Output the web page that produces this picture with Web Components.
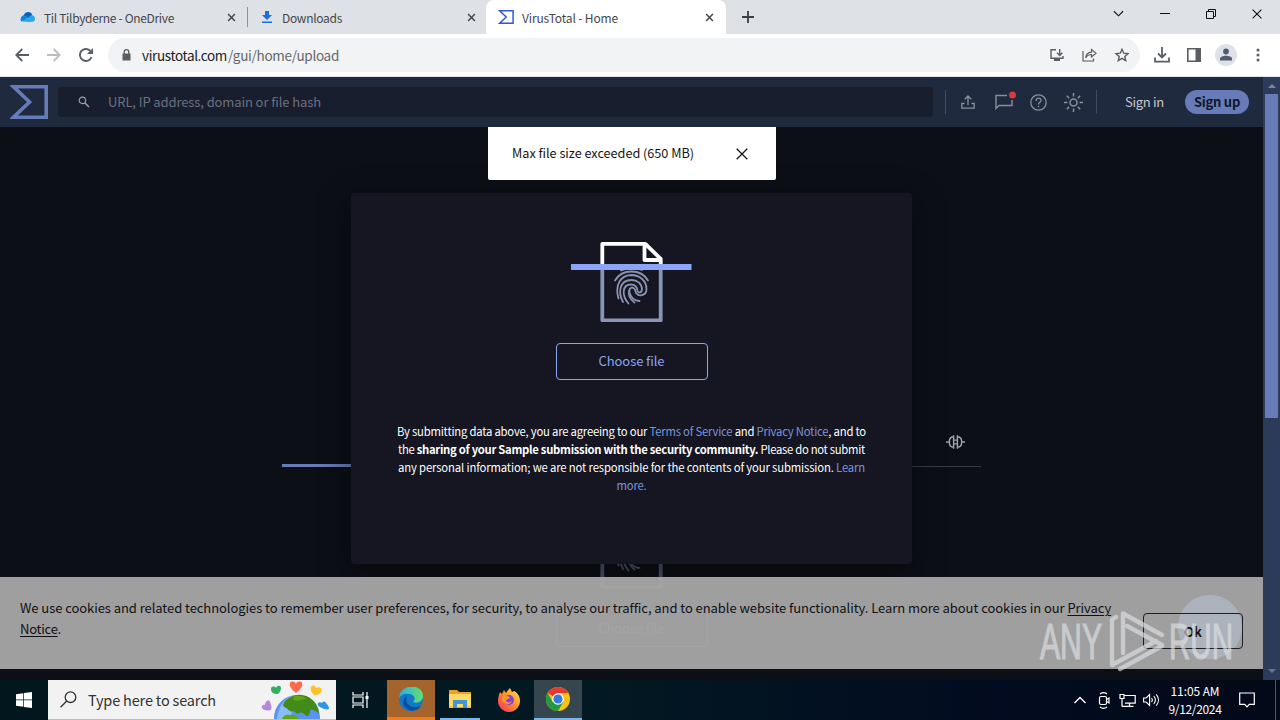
<!DOCTYPE html>
<html lang="en">
<head>
<meta charset="utf-8">
<title>VirusTotal - Home</title>
<style>
html, body {
  margin: 0;
  width: 1280px;
  height: 720px;
  overflow: hidden;
}
body {
  font-family: "Noto Sans CJK SC", "Noto Sans", sans-serif;
  display: flex;
  flex-direction: column;
}
</style>
</head>
<body>
<browser-tabs></browser-tabs>
<browser-toolbar></browser-toolbar>
<vt-page></vt-page>
<task-bar></task-bar>

<script>
const ICONS = {
  cloud: `<svg viewBox="0 0 18 14"><path fill="#0a63b8" d="M4 5C6 0 13 0 14 5L9 9 1 8z"/><path fill="#1683dc" d="M1 12C-1 8 2 5 6 5l9 7z"/><path fill="#29a9ea" d="M3 12c2-2 7-5 10-7 3-1 6 4 3 7-1 1-11 1-13 0z"/></svg>`,
  downBlue: `<svg viewBox="0 0 12 14"><path fill="#1a6fe0" d="M4 1h4v4h3L6 10 1 5h3zM1 11.5h10V13H1z"/></svg>`,
  close: `<svg viewBox="0 0 10 10"><path stroke="currentColor" stroke-width="1.7" d="M1.2 1.2l7.6 7.6m0-7.6L1.2 8.8"/></svg>`,
  thinClose: `<svg viewBox="0 0 12 12"><path stroke="currentColor" stroke-width="1.3" d="M.7.7l10.6 10.6m0-10.6L.7 11.3"/></svg>`,
  plus: `<svg viewBox="0 0 12 12"><path stroke="currentColor" stroke-width="1.8" d="M6 0v12M0 6h12"/></svg>`,
  sigma: `<svg viewBox="0 0 38 34"><path fill="none" stroke="currentColor" stroke-width="3.6" d="M3.5 1.8h32.7v30.4H3.5L19.5 17z"/></svg>`,
  chevDown: `<svg viewBox="0 0 12 8"><path fill="none" stroke="currentColor" stroke-width="1.2" d="M1 1l5 5 5-5"/></svg>`,
  chevUp: `<svg viewBox="0 0 12 8"><path fill="none" stroke="currentColor" stroke-width="1.4" d="M.5 7L6 1.5 11.5 7"/></svg>`,
  minimize: `<svg viewBox="0 0 10 10"><path stroke="currentColor" d="M0 4.5h10"/></svg>`,
  restore: `<svg viewBox="0 0 10 10"><path fill="none" stroke="currentColor" d="M.5 2.5h7v7h-7zM2.5 2.5v-2h7v7h-2"/></svg>`,
  back: `<svg viewBox="0 0 14 14"><path fill="none" stroke="currentColor" stroke-width="1.8" d="M14 7H1.5M7.3 1L1.3 7l6 6"/></svg>`,
  forward: `<svg viewBox="0 0 14 14"><path fill="none" stroke="currentColor" stroke-width="1.8" d="M0 7h12.5M6.7 1l6 6-6 6"/></svg>`,
  reload: `<svg viewBox="0 0 14 14"><path fill="none" stroke="currentColor" stroke-width="1.9" d="M12.6 9A6 6 0 1 1 11.4 2.9"/><path fill="currentColor" d="M14 0v6H8z"/></svg>`,
  lock: `<svg viewBox="0 0 9 12"><path fill="currentColor" d="M.5 4.5h8v7h-8z"/><path fill="none" stroke="currentColor" stroke-width="1.3" d="M2.2 5V3a2.3 2.3 0 0 1 4.6 0v2"/></svg>`,
  install: `<svg viewBox="0 0 14 14"><path fill="none" stroke="currentColor" stroke-width="1.4" d="M6 1.700H1v8.600h12V8M9.700 1v6M7 4.700l2.700 2.800 2.700-2.800"/><path fill="currentColor" d="M4 10h6v3H4z"/></svg>`,
  share: `<svg viewBox="0 0 15 14"><path fill="none" stroke="currentColor" stroke-width="1.2" d="M1 3v10h10.500v-2.500M3.700 10C4 6.300 6 4.300 9.500 4.200V1.500L14 5.300l-4.500 3.700V6.500C7 6.500 5 7.500 3.700 10z"/></svg>`,
  star: `<svg viewBox="0 0 14 14"><path fill="none" stroke="currentColor" stroke-width="1.4" d="M7 1.300l1.700 3.900 4.300.4-3.200 2.800.9 4.200L7 10.400l-3.700 2.200.9-4.200L1 5.600l4.300-.4z"/></svg>`,
  download: `<svg viewBox="0 0 16 16"><path fill="none" stroke="currentColor" stroke-width="1.8" d="M8 0v10M4 6.500l4 4 4-4M1 10.500v4.200h14v-4.200"/></svg>`,
  panel: `<svg viewBox="0 0 14 14"><path fill="none" stroke="currentColor" stroke-width="1.6" d="M.8.8h12.400v12.400H.8z"/><path fill="currentColor" d="M8.500 0H14v14H8.500z"/></svg>`,
  person: `<svg viewBox="0 0 22 22"><circle cx="11" cy="11" r="11" fill="#dfe1e8"/><circle cx="11" cy="7.500" r="2.900" fill="#515b70"/><path fill="#515b70" d="M5 16.500v-1.700c0-4 12-4 12 0v1.700z"/></svg>`,
  dots: `<svg viewBox="0 0 4 14"><g fill="currentColor"><circle cx="2" cy="2" r="1.500"/><circle cx="2" cy="7" r="1.500"/><circle cx="2" cy="12" r="1.500"/></g></svg>`,
  search: `<svg viewBox="0 0 12 12"><circle cx="4.400" cy="4.400" r="3.200" fill="none" stroke="currentColor" stroke-width="1.200"/><path stroke="currentColor" stroke-width="1.500" d="M6.700 6.700l4.300 4.300"/></svg>`,
  upload: `<svg viewBox="0 0 14 14"><path fill="none" stroke="currentColor" stroke-width="1.3" d="M7 10V1.200M3.700 4.300L7 1l3.300 3.300M3.500 8.500H.8v4.700h12.400V8.500h-2.700"/></svg>`,
  chat: `<svg viewBox="0 0 21 19"><path fill="none" stroke="currentColor" stroke-width="1.400" d="M12 4.500H1v13l3-3h13V9"/><circle cx="17.500" cy="4" r="3.500" fill="#d63a3c"/></svg>`,
  help: `<svg viewBox="0 0 17 17"><circle cx="8.500" cy="8.500" r="7.700" fill="none" stroke="currentColor" stroke-width="1.300"/><path fill="none" stroke="currentColor" stroke-width="1.300" d="M6 7c0-3.800 5.200-3.500 5-.5-.1 1.800-2.500 2-2.500 4M8.500 11.700v1.500"/></svg>`,
  sun: `<svg viewBox="0 0 19 19"><g fill="none" stroke="currentColor" stroke-width="1.500"><circle cx="9.500" cy="9.500" r="3.500"/><path d="M9.500 0v3.400M9.500 15.600V19M0 9.500h3.400M15.600 9.500H19M2.800 2.800l2.400 2.400M13.800 13.800l2.400 2.400M16.200 2.800l-2.400 2.400M5.200 13.800l-2.400 2.400"/></g></svg>`,
  community: `<svg viewBox="0 0 20 16"><path fill="none" stroke="currentColor" stroke-width="1.500" d="M0 8h3M17 8h3M8 1v14M12 1v14M8 2.500C4 2.500 3.500 5 3.500 8s.5 5.500 4.500 5.500M12 2.500c4 0 4.500 2.500 4.500 5.500s-.5 5.500-4.500 5.500M8 6h4M8 10h4"/></svg>`,
  windows: `<svg viewBox="0 0 16 16"><path fill="#fff" d="M0 2.200L7.300 1.200v6.400H0zM8 1.100L16 0v7.600H8zM0 8.300h7.300v6.500L0 13.800zM8 8.300h8V16l-8-1.100z"/></svg>`,
  lens: `<svg viewBox="0 0 17 17"><circle cx="10.500" cy="6.200" r="5.300" fill="none" stroke="currentColor" stroke-width="1.300"/><path stroke="currentColor" stroke-width="1.300" d="M6.700 10L.6 16.300"/></svg>`,
  globe: `<svg viewBox="0 0 72 39">
    <g>
      <path fill="#ff6a4e" d="M36 13C31 9 29 6 30 3c1-2 5-2 6 1 1-3 5-3 6-1 1 3-1 6-6 10z"/>
      <path fill="#31ae62" d="M18 14c-5 0-7-2-7-5s4-3 5-1c1-3 5-3 5 0 0 2-1 4-3 6z"/>
      <path fill="#ffc02b" d="M54 15c-2-2-4-5-3-8 1-2 4-2 5 1 3-2 6 0 6 2-1 4-4 5-8 5z"/>
      <path fill="#b488dc" d="M11 30c-5 1-8 0-9-2-1-3 2-4 3-3 0-4 4-6 5-3 1 2 2 5 1 8z"/>
      <path fill="#2f95df" d="M62 28c-3-1-5-3-4-5 1-1 3-1 4 0 1-2 3-2 4 0 2 2 3 4 3 6-3 1-5 0-7-1z"/>
    </g>
    <circle cx="37" cy="38" r="23" fill="#5b93f3"/><path fill="#8abdf9" d="M17 39c1-12 7-21 17-24l-3 24z"/>
    <path fill="#438b18" d="M23 26c0-5 7-10 14-11 8-1 15 3 19 9 2 3 3 7 3 10-2-4-6-3-8-5-2 3 0 7-4 7-3-1-4-5-8-3-3 2-4-2-6-2-3 2-4-2-10-5z"/>
    <path fill="#62a517" d="M22 39c1-4 5-5 8-4 4-1 8 1 9 4zM34 16c5-1 10 0 13 3-5 0-9 3-14 1z"/>
  </svg>`,
  taskView: `<svg viewBox="0 0 17 16"><path fill="none" stroke="#fff" stroke-width="1.200" d="M1 0v3h10V0M1 16v-3h10v3M1 5h10v6H1zM15 0v16"/><path fill="#fff" d="M13.500 4h3v3h-3z"/></svg>`,
  edge: `<svg viewBox="0 0 24 24"><defs><linearGradient id="a"><stop stop-color="#2aaee8"/><stop offset="1" stop-color="#63e06b"/></linearGradient></defs><circle cx="12" cy="12" r="12" fill="#1278c9"/><path fill="url(#a)" d="M0 12C0-4 24-4 24 9c0 5-5 8-10 6 4-4 0-8-4-8C5 6 1 8 0 12z"/><path fill="#0b4e9c" d="M8 9c-3 7 3 14 14 10-4 6-12 6-16 1C3 16 4 11 8 9z"/></svg>`,
  folder: `<svg viewBox="0 0 22 20"><path fill="#e8a321" d="M0 1h8l2 2h12v16H0z"/><path fill="#ffd968" d="M0 5h22v13H0z"/><path fill="#3e98d6" d="M4 11h14v8h-4v-4H8v4H4z"/><path fill="#f6c440" d="M0 17h4v2H0zM18 17h4v2h-4z"/></svg>`,
  firefox: `<svg viewBox="0 0 24 24"><defs><linearGradient id="f" x1="1" x2="0" y2="1"><stop stop-color="#fff04b"/><stop offset=".5" stop-color="#ff8a2b"/><stop offset="1" stop-color="#f72867"/></linearGradient></defs><path fill="url(#f)" d="M3 4l2 2 2-4 2 3c1-2 3-4 4-5l2 4 2-1c4 2 6 6 6 10 0 6-5 11-11 11S1 19 1 13c0-4 1-6 2-9z"/><circle cx="12" cy="12" r="5" fill="#8543d9"/><path fill="#ff9130" d="M5 8c4-1 7 0 8 2l-4 2c0 3 4 3 6 1-2 5-9 3-10-1z"/></svg>`,
  chrome: `<svg viewBox="0 0 24 24"><circle cx="12" cy="12" r="12" fill="#fbc116"/><path fill="#e33b2e" d="M12 12L1.600 6A12 12 0 0 1 22.400 6H12z"/><path fill="#249a48" d="M1.600 6A12 12 0 0 0 12 24l5.200-9L12 12 6.800 15z"/><circle cx="12" cy="12" r="5.800" fill="#fff"/><circle cx="12" cy="12" r="4.600" fill="#3479e5"/></svg>`,
  camera: `<svg viewBox="0 0 12 17"><g fill="none" stroke="#fff" stroke-width="1.200"><rect x="1.500" y="4.500" width="7" height="8" rx="1.500"/><path d="M8.500 7.500l2.500-1.500v5L8.500 9.500M2 2c2-1.500 5-1.500 7 0M2 15c2 1.500 5 1.500 7 0"/></g></svg>`,
  network: `<svg viewBox="0 0 17 15"><path fill="none" stroke="#fff" stroke-width="1.200" d="M5.500 2.500h10.700v7.700H6M1 1.500h4v4H1zM3 5.500v8M3 13.400h8.500M10.500 10.200v3M7.500 13.400h7"/></svg>`,
  volume: `<svg viewBox="0 0 17 14"><path fill="none" stroke="#fff" stroke-width="1.100" d="M.6 5v4h2.500l3.500 3.500v-11L3.100 5zM8.500 5c1 1.200 1 2.800 0 4M10.800 3c2 2.500 2 5.500 0 8M13.200 1.300c3 3.500 3 8 0 11.400"/></svg>`,
  notify: `<svg viewBox="0 0 16 16"><path fill="none" stroke="#fff" stroke-width="1.200" d="M.7 1h14.600v11.300h-5L8 14.800l-2.300-2.500h-5z"/></svg>`,
  // document with a fingerprint and the scan bar across it
  scanFile: `<svg viewBox="0 0 121 80"><g fill="none" stroke-width="3.800" stroke-linejoin="round"><path stroke="#8b95b3" d="M31.300 24v54.300h58.400V24"/><path stroke="#fff" d="M31.300 24V1.900h43l15.400 15V24"/><path stroke="#fff" d="M73.500 2v16h16"/></g>
    <g fill="none" stroke="#8993b0" stroke-width="1.800" stroke-linecap="round">
    <path d="M50 28.500c7-3 14-3 21-.5M44 38.500c7-12 26-12 33 0"/>
    <path d="M47.500 56.500C44 45 48 33.500 60 33c9 0 15.500 6 15.500 14 0 7-9 8.500-11 2.500-1-6-7-4.500-6 1 1 5 5 8.500 10 8.500"/>
    <path d="M52 60c-5-9-4-22 8.500-22 6 0 10.500 4 10.500 9.500M57.500 61.500c-7-8-6.500-19 2.500-19 4 0 6 2.500 6.500 6 .5 3 4 2.500 4.500-1"/>
    <path d="M63.500 60.500C60 58 57 54 58 49"/></g>
    <path fill="#8aa5f5" d="M0 22h120.500v6H0z"/></svg>`,
  watermark: `<svg viewBox="0 0 204 62"><g fill="#dfe1e4" stroke="#dfe1e4" stroke-width="1.200" font-family="Liberation Sans Narrow, Liberation Sans, sans-serif" font-size="50"><text x="1" y="48.500" textLength="62" lengthAdjust="spacingAndGlyphs">ANY</text><text x="130" y="48.500" textLength="64" lengthAdjust="spacingAndGlyphs">RUN</text></g><path fill="none" stroke="#dfe1e4" stroke-width="4.400" stroke-linecap="round" stroke-linejoin="round" d="M77 7l-4 2.500V55l44-24M84 43V3.500L123 25M88 16l35 19M81 59l42-23"/></svg>`
};

class UiIcon extends HTMLElement {
  connectedCallback() {
    const w = this.getAttribute("w");
    const h = this.getAttribute("h") || w;
    this.attachShadow({ mode: "open" }).innerHTML = `
      <style>
:host { display: block; flex: none; width: ${w}px; height: ${h}px; }
svg { display: block; width: 100%; height: 100%; }
      </style>${ICONS[this.getAttribute("name")]}`;
  }
}

// One line of text, tracked so that it fills the given width
class FitText extends HTMLElement {
  connectedCallback() {
    this.attachShadow({ mode: "open" }).innerHTML = `
      <style>
:host { display: block; flex: none; white-space: nowrap; width: ${this.getAttribute("w")}px; }
span { display: inline-block; }
      </style><span><slot></slot></span>`;
    const line = this.shadowRoot.querySelector("span");
    const extra = Number(this.getAttribute("w")) - line.getBoundingClientRect().width;
    line.style.letterSpacing = `${extra / this.textContent.length}px`;
  }
}

class BrowserTab extends HTMLElement {
  connectedCallback() {
    this.attachShadow({ mode: "open" }).innerHTML = `
      <style>
:host {
  display: flex;
  align-items: center;
  box-sizing: border-box;
  height: 34px;
  color: #45474b;
  font-size: 12px;
  line-height: 33px;
}
:host([active]) {
  background: #fff;
  border-radius: 8px 8px 0 0;
}
.close { margin-left: auto; }
      </style>
      <slot></slot>
      <ui-icon class="close" name="close" w="9"></ui-icon>`;
  }
}

class BrowserTabs extends HTMLElement {
  connectedCallback() {
    this.attachShadow({ mode: "open" }).innerHTML = `
      <style>
:host { display: flex; align-items: center; height: 34px; flex: none; background: #dee1e6; }
browser-tab { flex: none; }
.one { width: 247px; padding: 0 11px 0 20px; gap: 8px; }
.two { width: 238px; padding: 0 10px 0 13px; gap: 9px; }
.three { width: 240px; padding: 0 12px; gap: 8px; }
.sep { width: 1px; height: 20px; background: #8d9096; }
.plus { margin-left: 16px; color: #3c4043; }
.win { display: flex; align-items: center; gap: 36px; margin: -6px 18px 0 auto; color: #111; }
      </style>
      <browser-tab class="one"><ui-icon name="cloud" w="16" h="12"></ui-icon><fit-text w="130">Til Tilbyderne - OneDrive</fit-text></browser-tab>
      <div class="sep"></div>
      <browser-tab class="two"><ui-icon name="downBlue" w="12" h="14"></ui-icon><fit-text w="60">Downloads</fit-text></browser-tab>
      <browser-tab class="three" active><ui-icon name="sigma" w="16" h="14" style="color:#3457d5"></ui-icon><fit-text w="96">VirusTotal - Home</fit-text></browser-tab>
      <ui-icon class="plus" name="plus" w="12"></ui-icon>
      <div class="win">
        <ui-icon name="chevDown" w="11" h="8"></ui-icon>
        <ui-icon name="minimize" w="10"></ui-icon>
        <ui-icon name="restore" w="10"></ui-icon>
        <ui-icon name="thinClose" w="10"></ui-icon>
      </div>`;
  }
}

class BrowserToolbar extends HTMLElement {
  connectedCallback() {
    this.attachShadow({ mode: "open" }).innerHTML = `
      <style>
:host {
  display: flex;
  align-items: center;
  flex: none;
  box-sizing: border-box;
  height: 43px;
  padding: 0 20px 0 15px;
  background: #fff;
  border-bottom: 1px solid #dfe3ea;
  color: #5a5d62;
}
.nav { display: flex; gap: 18px; width: 93px; }
.url {
  display: flex;
  align-items: center;
  box-sizing: border-box;
  width: 1032px;
  height: 34px;
  padding: 0 11px 0 14px;
  border-radius: 17px;
  background: #f1f3f4;
  font-size: 13.5px;
  line-height: 34px;
}
.host { color: #202124; margin-left: 8px; }
.path { color: #65686d; margin-left: 1px; }
.inner { display: flex; gap: 18px; margin-left: auto; }
.right { display: flex; align-items: center; margin-left: auto; }
      </style>
      <div class="nav">
        <ui-icon name="back" w="14"></ui-icon>
        <ui-icon name="forward" w="14" style="color:#bcbec1"></ui-icon>
        <ui-icon name="reload" w="14"></ui-icon>
      </div>
      <div class="url">
        <ui-icon name="lock" w="9" h="12" style="margin-right:3px"></ui-icon>
        <fit-text class="host" w="85">virustotal.com</fit-text>
        <fit-text class="path" w="111">/gui/home/upload</fit-text>
        <div class="inner">
          <ui-icon name="install" w="14"></ui-icon>
          <ui-icon name="share" w="15" h="14"></ui-icon>
          <ui-icon name="star" w="14"></ui-icon>
        </div>
      </div>
      <div class="right">
        <ui-icon name="download" w="16"></ui-icon>
        <ui-icon name="panel" w="14" style="margin-left:17px"></ui-icon>
        <ui-icon name="person" w="22" style="margin-left:14px"></ui-icon>
        <ui-icon name="dots" w="4" h="14" style="margin-left:19px"></ui-icon>
      </div>`;
  }
}

class VtHeader extends HTMLElement {
  connectedCallback() {
    this.attachShadow({ mode: "open" }).innerHTML = `
      <style>
:host {
  display: flex;
  align-items: center;
  flex: none;
  box-sizing: border-box;
  height: 50px;
  padding: 0 14px 0 10px;
  background: #202a3e;
  font-size: 13px;
  line-height: 20px;
  color: #8790a1;
}
.logo { color: #667bb8; }
.search {
  display: flex;
  align-items: center;
  box-sizing: border-box;
  width: 875px;
  height: 30px;
  margin-left: 10px;
  padding-left: 20px;
  gap: 18px;
  border-radius: 4px;
  background: #191e2e;
  color: #6a707f;
}
.sep { width: 1px; height: 24px; background: #404c65; }
.icons { display: flex; align-items: center; height: 24px; margin: 0 14px 0 15px; }
.up {
  margin-left: auto;
  padding: 2px 9px;
  border-radius: 12px;
  background: #667bb8;
  color: #101728;
  font-weight: 700;
}
      </style>
      <ui-icon class="logo" name="sigma" w="38" h="34"></ui-icon>
      <div class="search">
        <ui-icon name="search" w="12" style="color:#9aa0aa"></ui-icon>
        <fit-text w="213">URL, IP address, domain or file hash</fit-text>
      </div>
      <div class="sep" style="margin-left:12px"></div>
      <div class="icons">
        <ui-icon name="upload" w="14"></ui-icon>
        <ui-icon name="chat" w="21" h="19" style="margin:-4px 0 0 20px"></ui-icon>
        <ui-icon name="help" w="17" style="margin-left:14px"></ui-icon>
        <ui-icon name="sun" w="19" style="margin-left:17px"></ui-icon>
      </div>
      <div class="sep" style="margin-left:-1px"></div>
      <fit-text w="39" style="margin-left:28px;color:#c4c7ce">Sign in</fit-text>
      <div class="up"><fit-text w="46">Sign up</fit-text></div>`;
  }
}

class FileDrop extends HTMLElement {
  connectedCallback() {
    this.attachShadow({ mode: "open" }).innerHTML = `
      <style>
:host { display: flex; flex-direction: column; align-items: center; gap: 21px; }
.choose {
  display: flex;
  align-items: center;
  justify-content: center;
  box-sizing: border-box;
  width: 152px;
  height: 37px;
  padding-bottom: 2px;
  border: 1px solid #8ba6f3;
  border-radius: 4px;
  color: #8ba6f3;
  font-size: 13px;
  line-height: 20px;
}
      </style>
      <ui-icon name="scanFile" w="121" h="80"></ui-icon>
      <div class="choose"><fit-text w="66">Choose file</fit-text></div>`;
  }
}

class UploadDialog extends HTMLElement {
  connectedCallback() {
    this.attachShadow({ mode: "open" }).innerHTML = `
      <style>
:host {
  display: block;
  box-sizing: border-box;
  width: 561px;
  height: 371px;
  padding-top: 49px;
  border-radius: 4px;
  background: #151622;
  box-shadow: 0 9px 30px 4px rgba(0, 0, 0, .38);
}
.legal {
  display: flex;
  flex-direction: column;
  align-items: center;
  margin-top: 42px;
  font-size: 11.3px;
  line-height: 18px;
  color: #fff;
}
.link { color: #7c94dc; }
      </style>
      <file-drop></file-drop>
      <div class="legal">
        <fit-text w="469">By submitting data above, you are agreeing to our <span class="link">Terms of Service</span> and <span class="link">Privacy Notice</span>, and to</fit-text>
        <fit-text w="467">the <b>sharing of your Sample submission with the security community.</b> Please do not submit</fit-text>
        <fit-text w="467">any personal information; we are not responsible for the contents of your submission. <span class="link">Learn</span></fit-text>
        <fit-text w="30" class="link">more.</fit-text>
      </div>`;
  }
}

class ToastMessage extends HTMLElement {
  connectedCallback() {
    this.attachShadow({ mode: "open" }).innerHTML = `
      <style>
:host {
  display: flex;
  align-items: center;
  justify-content: space-between;
  box-sizing: border-box;
  width: 288px;
  height: 53px;
  padding: 0 28px 0 24px;
  background: #fff;
  border-radius: 0 0 2px 2px;
  color: #161616;
  font-size: 12.7px;
  line-height: 20px;
}
::slotted(*) { margin-top: -1px; }
      </style>
      <slot></slot>
      <ui-icon name="thinClose" w="12"></ui-icon>`;
  }
}

class CookieBar extends HTMLElement {
  connectedCallback() {
    this.attachShadow({ mode: "open" }).innerHTML = `
      <style>
:host {
  display: flex;
  justify-content: space-between;
  box-sizing: border-box;
  height: 92px;
  padding: 20px 20px 0;
  background:
    radial-gradient(circle at 1210px 50px, rgba(186, 198, 216, .5) 31.5px, transparent 32.5px),
    rgba(169, 169, 169, .94);
  color: #101114;
  font-size: 13px;
  line-height: 21px;
}
u { text-underline-offset: 2px; }
.ok {
  display: flex;
  align-items: center;
  justify-content: center;
  box-sizing: border-box;
  width: 100px;
  height: 36px;
  margin-top: 16px;
  border: 1px solid #1c1e22;
  border-radius: 4px;
  font-weight: 700;
}
      </style>
      <div>
        <fit-text w="1091">We use cookies and related technologies to remember user preferences, for security, to analyse our traffic, and to enable website functionality. Learn more about cookies in our <u>Privacy</u></fit-text>
        <fit-text w="41"><u>Notice</u>.</fit-text>
      </div>
      <div class="ok"><fit-text w="18">Ok</fit-text></div>`;
  }
}

class VtPage extends HTMLElement {
  connectedCallback() {
    this.attachShadow({ mode: "open" }).innerHTML = `
      <style>
:host { display: flex; height: 603px; flex: none; position: relative; }
.view {
  position: relative;
  display: flex;
  flex-direction: column;
  width: 1263px;
  height: 603px;
  overflow: hidden;
  background: #0d0f17;
}
.content { flex: 1; width: 699px; margin: 0 auto; padding-top: 307px; }
.tabs {
  display: flex;
  align-items: flex-start;
  justify-content: flex-end;
  box-sizing: border-box;
  height: 33px;
  padding-right: 16px;
  border-bottom: 1px solid #373b45;
  color: #a0a3ab;
}
.current { width: 233px; height: 3px; margin-top: -3px; background: #667bb8; }
.content file-drop { margin-top: 42px; opacity: .5; }
/* layers over the page */
upload-dialog { position: absolute; left: 351px; top: 116px; }
toast-message { position: absolute; left: 488px; top: 50px; }
cookie-bar { position: absolute; left: 0; right: 0; top: 500px; }
.mark { position: absolute; left: 1039px; top: 533px; opacity: .66; }
.scroll {
  display: flex;
  flex-direction: column;
  align-items: center;
  width: 17px;
  background: #2d3b5b;
}
.thumb { width: 13px; height: 324px; background: #667bb8; }
.arrow { width: 0; border: 4px solid transparent; border-top-width: 0; border-bottom-color: #7884a4; margin: 7px 0 6px; }
.arrow.down { border-top: 4px solid #65749a; border-bottom: 0; margin: auto 0 7px; }
      </style>
      <div class="view">
        <vt-header></vt-header>
        <div class="content">
          <div class="tabs"><ui-icon name="community" w="19" h="16"></ui-icon></div>
          <div class="current"></div>
          <file-drop></file-drop>
        </div>
        <upload-dialog></upload-dialog>
        <toast-message><fit-text w="182">Max file size exceeded (650 MB)</fit-text></toast-message>
        <cookie-bar></cookie-bar>
        <ui-icon class="mark" name="watermark" w="204" h="62"></ui-icon>
      </div>
      <div class="scroll"><div class="arrow"></div><div class="thumb"></div><div class="arrow down"></div></div>`;
  }
}

class TaskBar extends HTMLElement {
  connectedCallback() {
    this.attachShadow({ mode: "open" }).innerHTML = `
      <style>
:host {
  display: flex;
  align-items: center;
  height: 40px;
  flex: none;
  background: linear-gradient(90deg, #02161d, #021923 45%, #020c20 75%, #020a19);
  color: #fff;
}
.start { display: flex; justify-content: center; width: 48px; }
.search {
  display: flex;
  align-items: center;
  box-sizing: border-box;
  width: 288px;
  height: 40px;
  padding: 0 4px 0 12px;
  gap: 11px;
  background: #f2f2f2;
  border: solid #b9bdbf;
  border-width: 0 0 1px;
  color: #333;
  font-size: 14.5px;
  line-height: 40px;
}
.app {
  display: flex;
  align-items: center;
  justify-content: center;
  box-sizing: border-box;
  width: 48px;
  height: 40px;
}
.app.edge { background: #a4642b; border-bottom: 3px solid #f47d13; margin-left: 3px; }
.app.open { width: 40px; border-bottom: 2px solid #76b9ed; margin: 0 5px; }
.app.chrome { background: #36464f; border-bottom: 2px solid #76b9ed; margin-left: 1px; }
.tray { display: flex; align-items: center; gap: 7px; margin-left: auto; }
.clock { display: flex; flex-direction: column; align-items: center; width: 52px; margin: -1px 18px 0 9px; font-size: 12px; line-height: 18px; }
.desk { width: 1px; height: 40px; margin: 0 4px 0 20px; background: #4d5561; }
      </style>
      <div class="start"><ui-icon name="windows" w="16"></ui-icon></div>
      <div class="search">
        <ui-icon name="lens" w="17"></ui-icon>
        <fit-text w="128">Type here to search</fit-text>
        <ui-icon name="globe" w="72" h="39" style="margin-left:auto"></ui-icon>
      </div>
      <div class="app"><ui-icon name="taskView" w="17" h="16"></ui-icon></div>
      <div class="app edge"><ui-icon name="edge" w="24"></ui-icon></div>
      <div class="app open"><ui-icon name="folder" w="22" h="20"></ui-icon></div>
      <div class="app"><ui-icon name="firefox" w="24"></ui-icon></div>
      <div class="app chrome"><ui-icon name="chrome" w="24"></ui-icon></div>
      <div class="tray">
        <ui-icon name="chevUp" w="12" h="8" style="margin-right:5px"></ui-icon>
        <ui-icon name="camera" w="12" h="17" style="margin-right:2px"></ui-icon>
        <ui-icon name="network" w="17" h="15"></ui-icon>
        <ui-icon name="volume" w="17" h="14"></ui-icon>
      </div>
      <div class="clock"><fit-text w="49">11:05 AM</fit-text><fit-text w="53">9/12/2024</fit-text></div>
      <ui-icon name="notify" w="16"></ui-icon>
      <div class="desk"></div>`;
  }
}

customElements.define("ui-icon", UiIcon);
customElements.define("fit-text", FitText);
customElements.define("browser-tab", BrowserTab);
customElements.define("browser-tabs", BrowserTabs);
customElements.define("browser-toolbar", BrowserToolbar);
customElements.define("vt-header", VtHeader);
customElements.define("file-drop", FileDrop);
customElements.define("upload-dialog", UploadDialog);
customElements.define("toast-message", ToastMessage);
customElements.define("cookie-bar", CookieBar);
customElements.define("vt-page", VtPage);
customElements.define("task-bar", TaskBar);
</script>
</body>
</html>
